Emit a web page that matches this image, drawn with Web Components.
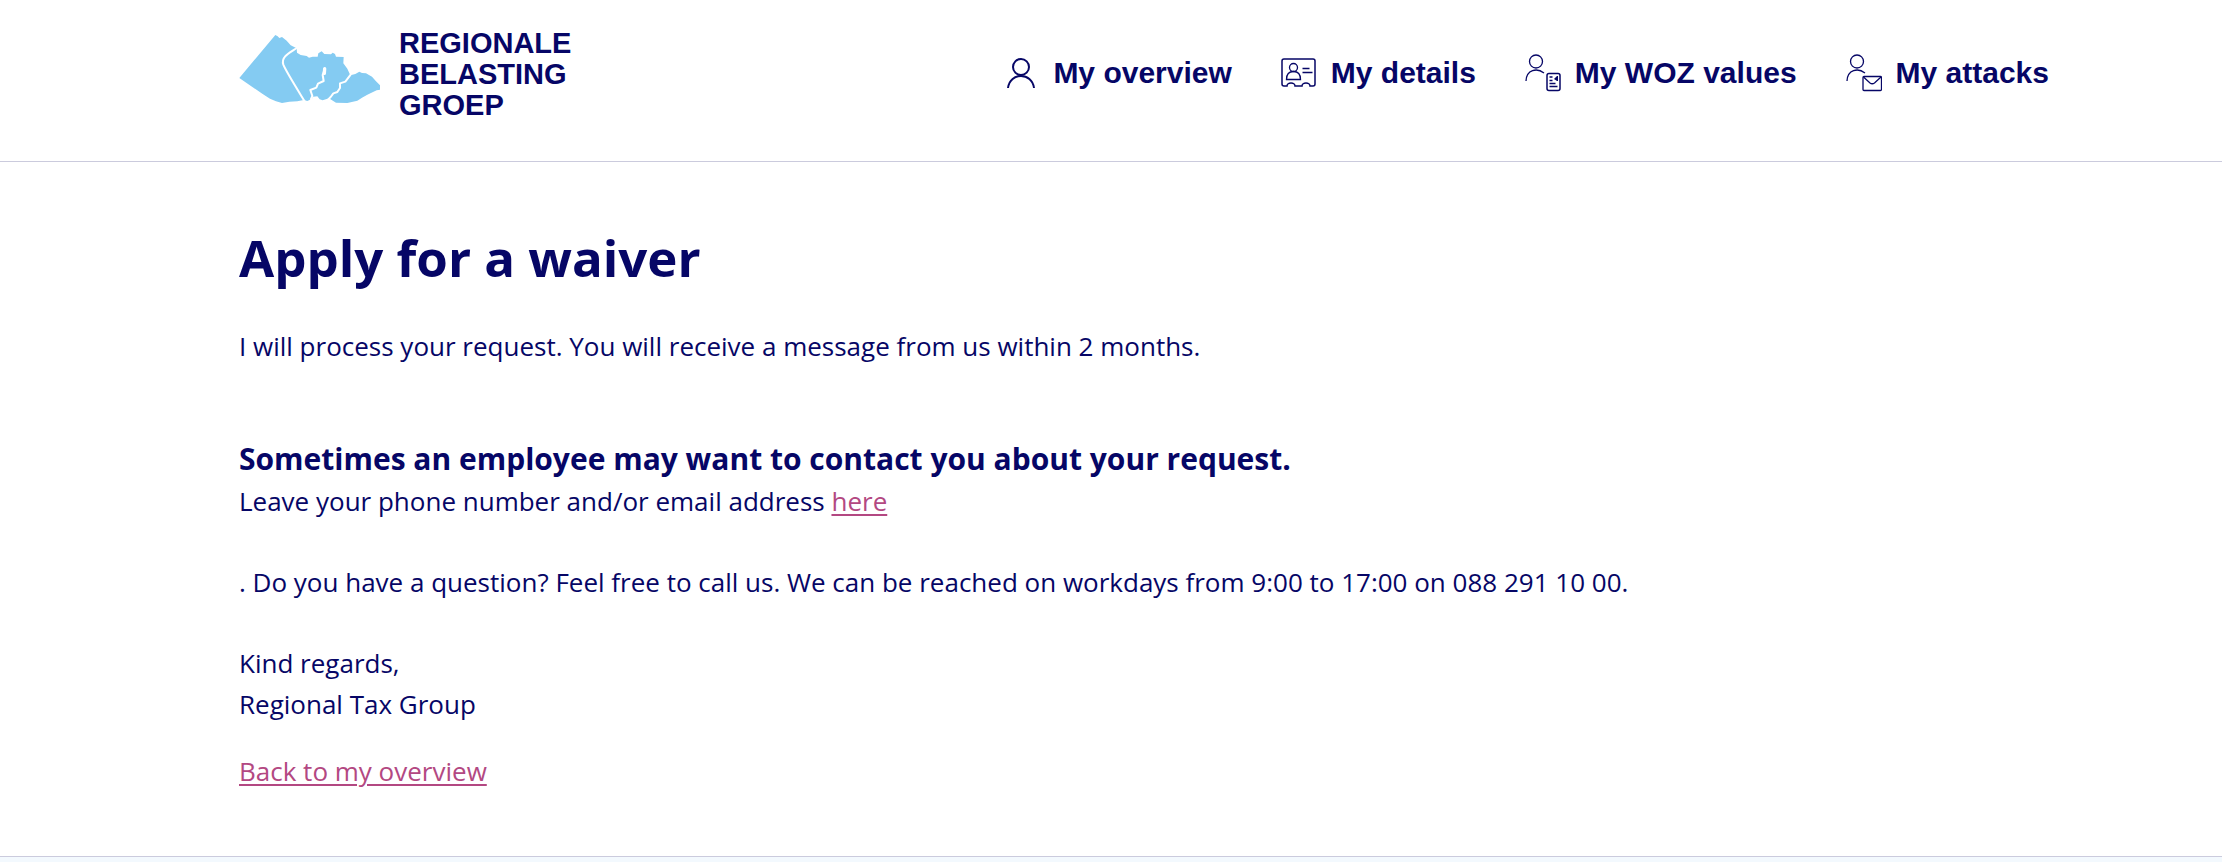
<!DOCTYPE html>
<html lang="en">
<head>
<meta charset="UTF-8">
<meta name="viewport" content="width=device-width, initial-scale=1">
<title>Apply for a waiver</title>
<style>
    body {
        margin: 0;
        background: #fff;
        color: #060666;
        font-family: 'Open Sans', 'Noto Sans', sans-serif;
        font-size: 26px;
        line-height: 41px;
        --line: #cbcbdd;
        --link: #b34882;
        --page-left: 239px;
        --page-right: 173px;
    }
</style>
</head>
<body>
<rbg-page>
    <rbg-header slot="header">
        <rbg-logo slot="logo"></rbg-logo>
        <rbg-nav-item icon="person" href="#overview">My overview</rbg-nav-item>
        <rbg-nav-item icon="card" href="#details">My details</rbg-nav-item>
        <rbg-nav-item icon="woz" href="#woz">My WOZ values</rbg-nav-item>
        <rbg-nav-item icon="mail" href="#attacks">My attacks</rbg-nav-item>
    </rbg-header>
    <rbg-waiver></rbg-waiver>
</rbg-page>

<script>
    const ICONS = {
        person: `
            <g stroke-width="2">
                <circle cx="18" cy="13" r="8"/>
                <path d="M5 34C7 18 29 18 31 34"/>
            </g>`,
        card: `
            <path stroke-width="1.5" d="M3 5h29q2 0 2 2v23q0 2-2 2h-3a4 3 0 0 0-8 0h-7a4 3 0 0 0-8 0H3q-2 0-2-2V7q0-2 2-2z"/>
            <circle cx="12.5" cy="13.5" r="4"/>
            <path d="M5.500 25.500q0-8 7-8t7 8zM21.500 14.500h7M21.500 18.500h10"/>`,
        woz: `
            <circle cx="11" cy="7.500" r="6.500"/>
            <path d="M1 27C1.500 15.500 12 13.500 19 19"/>
            <rect x="22" y="19.500" width="13" height="17" rx="2" stroke-width="1.500"/>
            <path d="M24.500 23h3M24.500 26.500h3M24.500 29.500h6M24.500 32.500h8"/>
            <path fill="currentColor" stroke="none" d="M29 25l3-3h1v5h-1z"/>`,
        mail: `
            <circle cx="11" cy="7.500" r="6.500"/>
            <path d="M1 27C1.500 15.500 12 13.500 19 19"/>
            <rect x="17" y="22.500" width="18.500" height="14" rx="1"/>
            <path d="M17.500 23l6.500 6q2.200 1.500 4.500 0l6.500-6"/>`
    };

    class RbgPage extends HTMLElement {
        constructor() {
            super();
            this.attachShadow({ mode: 'open' });
            this.shadowRoot.innerHTML = `
                <style>
                    :host {
                        display: flex;
                        flex-direction: column;
                        min-height: 100vh;
                    }
                    main {
                        padding: 64px var(--page-right) 64px var(--page-left);
                    }
                    footer {
                        flex: 1;
                        border-top: 1px solid var(--line);
                        background: #f3f9fe;
                    }
                </style>
                <slot name="header"></slot>
                <main><slot></slot></main>
                <footer></footer>
            `;
        }
    }

    class RbgHeader extends HTMLElement {
        constructor() {
            super();
            this.attachShadow({ mode: 'open' });
            this.shadowRoot.innerHTML = `
                <style>
                    :host {
                        display: block;
                        border-bottom: 1px solid var(--line);
                    }
                    header {
                        display: flex;
                        justify-content: space-between;
                        align-items: flex-start;
                        padding: 28px var(--page-right) 40px var(--page-left);
                    }
                    nav {
                        display: flex;
                        gap: 49px;
                        padding-top: 24px;
                    }
                </style>
                <header>
                    <slot name="logo"></slot>
                    <nav aria-label="Main"><slot></slot></nav>
                </header>
            `;
        }
    }

    class RbgLogo extends HTMLElement {
        constructor() {
            super();
            this.attachShadow({ mode: 'open' });
            this.shadowRoot.innerHTML = `
                <style>
                    :host {
                        display: block;
                    }
                    a {
                        display: flex;
                        align-items: flex-start;
                        gap: 18px;
                        color: inherit;
                        text-decoration: none;
                        font: bold 29px/31px 'Liberation Sans', Arial, sans-serif;
                    }
                    svg {
                        width: 142px;
                        height: 70px;
                        padding-top: 6px;
                    }
                    span {
                        display: block;
                    }
                </style>
                <a href="#home">
                    <svg viewBox="27 42 426 210" aria-hidden="true">
                        <path fill="#84cbf2" d="M28 174L136 45L143 49L148 54L156 51L170 62L182 76L200 85L201 98L212 105L230 108L237 113L248 110L263 110L265 100L275 94L283 102L303 103L308 98L315 102L318 110L341 111L340 130L352 146L361 166L376 162L388 155L396 159L408 160L426 170L438 184L450 196V209L440 211L412 224L396 233L382 242L352 249L318 248L305 240L297 235L278 241L269 238L262 229L250 230L245 237L232 243L221 240L202 244L178 245L156 249L138 244L120 236L98 222Z"/>
                        <g fill="none" stroke="#fff" stroke-width="6" stroke-linejoin="round">
                            <path d="M200 84C180 98 152 110 160 134C168 154 202 208 224 244"/>
                            <path d="M284 147L278 165L281 183L264 191L259 203L241 210L247 228L242 240"/>
                            <path d="M362 164L346 185L330 190V204L322 216L310 220L302 231L292 241"/>
                        </g>
                        <path stroke="#fff" stroke-width="10" stroke-linecap="round" d="M284 146L283 160"/>
                    </svg>
                    <div><span>REGIONALE</span><span>BELASTING</span><span>GROEP</span></div>
                </a>
            `;
        }
    }

    class RbgNavItem extends HTMLElement {
        constructor() {
            super();
            this.attachShadow({ mode: 'open' });
        }

        connectedCallback() {
            this.shadowRoot.innerHTML = `
                <style>
                    :host {
                        display: block;
                    }
                    a {
                        display: flex;
                        align-items: center;
                        gap: 14px;
                        color: inherit;
                        text-decoration: none;
                        font-family: 'Liberation Sans', Arial, sans-serif;
                        font-size: 30px;
                        font-weight: 700;
                        white-space: nowrap;
                    }
                    svg {
                        flex: none;
                        width: 36px;
                        height: 38px;
                        fill: none;
                        stroke: currentColor;
                        stroke-width: 1.3;
                    }
                </style>
                <a href="${this.getAttribute('href')}">
                    <svg viewBox="0 0 36 38" aria-hidden="true">${ICONS[this.getAttribute('icon')]}</svg>
                    <slot></slot>
                </a>
            `;
        }
    }

    class RbgWaiver extends HTMLElement {
        constructor() {
            super();
            this.attachShadow({ mode: 'open' });
            this.shadowRoot.innerHTML = `
                <style>
                    :host {
                        display: block;
                    }
                    h1, h2, p {
                        margin: 0;
                    }
                    h1 {
                        margin-bottom: 38px;
                        font-size: 51px;
                        line-height: 62px;
                    }
                    h2 {
                        margin-top: 70px;
                        font-size: 30px;
                        line-height: 44px;
                    }
                    p + p {
                        margin-top: 40px;
                    }
                    p.back {
                        margin-top: 26px;
                    }
                    a {
                        color: var(--link);
                        text-decoration-thickness: 2px;
                        text-underline-offset: 3px;
                    }
                </style>
                <h1>Apply for a waiver</h1>
                <p>I will process your request. You will receive a message from us within 2 months.</p>
                <h2>Sometimes an employee may want to contact you about your request.</h2>
                <p>Leave your phone number and/or email address <a href="#contact">here</a></p>
                <p>. Do you have a question? Feel free to call us. We can be reached on workdays from 9:00 to 17:00 on 088 291 10 00.</p>
                <p>Kind regards,<br>Regional Tax Group</p>
                <p class="back"><a href="#overview">Back to my overview</a></p>
            `;
        }
    }

    customElements.define('rbg-page', RbgPage);
    customElements.define('rbg-header', RbgHeader);
    customElements.define('rbg-logo', RbgLogo);
    customElements.define('rbg-nav-item', RbgNavItem);
    customElements.define('rbg-waiver', RbgWaiver);
</script>
</body>
</html>
